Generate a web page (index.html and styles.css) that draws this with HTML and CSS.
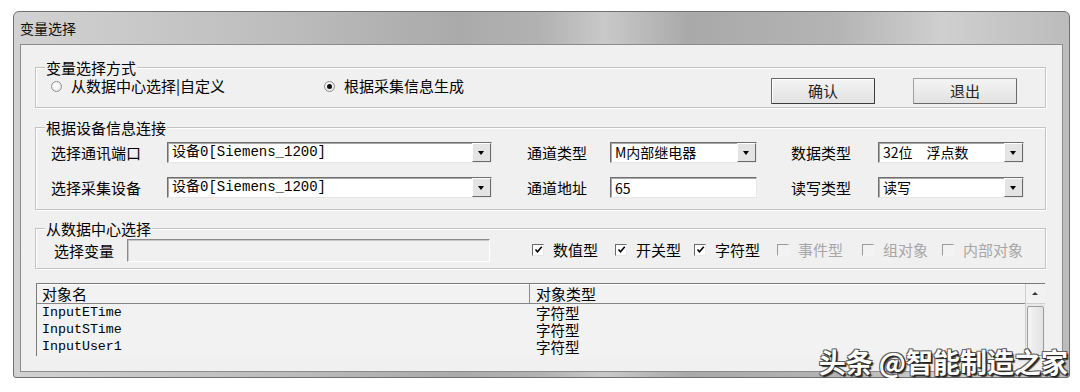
FILE: index.html
```html
<!DOCTYPE html>
<html lang="zh-CN">
<head>
    <meta charset="UTF-8">
    <meta name="viewport" content="width=device-width, initial-scale=1.0">
    <title>变量选择</title>
    <link rel="stylesheet" href="styles.css">
</head>
<body>
    <div class="window">
        <div class="titlebar">变量选择</div>
        <div class="client">
            <!-- 变量选择方式 -->
            <div class="group group-mode">
                <span class="group-title">变量选择方式</span>
                <label class="radio radio-first"><span class="radio-dot"></span>从数据中心选择|自定义</label>
                <label class="radio"><span class="radio-dot checked"></span>根据采集信息生成</label>
                <button class="btn btn-default">确认</button>
                <button class="btn">退出</button>
            </div>

            <!-- 根据设备信息连接 -->
            <div class="group group-device">
                <span class="group-title">根据设备信息连接</span>
                <div class="field-grid">
                    <span class="field-label">选择通讯端口</span>
                    <div class="combo"><span class="combo-text mono">设备0[Siemens_1200]</span><span class="combo-arrow"></span></div>
                    <span class="field-label col2">通道类型</span>
                    <div class="combo"><span class="combo-text">M内部继电器</span><span class="combo-arrow"></span></div>
                    <span class="field-label col3">数据类型</span>
                    <div class="combo"><span class="combo-text">32位　浮点数</span><span class="combo-arrow"></span></div>

                    <span class="field-label">选择采集设备</span>
                    <div class="combo"><span class="combo-text mono">设备0[Siemens_1200]</span><span class="combo-arrow"></span></div>
                    <span class="field-label col2">通道地址</span>
                    <div class="textbox">65</div>
                    <span class="field-label col3">读写类型</span>
                    <div class="combo"><span class="combo-text">读写</span><span class="combo-arrow"></span></div>
                </div>
            </div>

            <!-- 从数据中心选择 -->
            <div class="group group-center">
                <span class="group-title">从数据中心选择</span>
                <span class="var-label">选择变量</span>
                <div class="textbox var-input"></div>
                <div class="checks">
                    <label class="check w83"><span class="check-box on"><svg viewBox="0 0 9 9" width="9" height="9"><path d="M1.5 4.5 L3.5 6.8 L7.8 1.8" fill="none" stroke="#000" stroke-width="1.6"/></svg></span>数值型</label>
                    <label class="check w79"><span class="check-box on"><svg viewBox="0 0 9 9" width="9" height="9"><path d="M1.5 4.5 L3.5 6.8 L7.8 1.8" fill="none" stroke="#000" stroke-width="1.6"/></svg></span>开关型</label>
                    <label class="check w83"><span class="check-box on"><svg viewBox="0 0 9 9" width="9" height="9"><path d="M1.5 4.5 L3.5 6.8 L7.8 1.8" fill="none" stroke="#000" stroke-width="1.6"/></svg></span>字符型</label>
                    <label class="check w85 disabled"><span class="check-box"></span>事件型</label>
                    <label class="check w80 disabled"><span class="check-box"></span>组对象</label>
                    <label class="check disabled"><span class="check-box"></span>内部对象</label>
                </div>
            </div>

            <!-- 对象列表 -->
            <div class="list">
                <div class="list-body">
                    <div class="list-head">
                        <span class="col-name">对象名</span>
                        <span class="col-type">对象类型</span>
                    </div>
                    <div class="list-row"><span class="col-name mono">InputETime</span><span class="col-type">字符型</span></div>
                    <div class="list-row"><span class="col-name mono">InputSTime</span><span class="col-type">字符型</span></div>
                    <div class="list-row"><span class="col-name mono">InputUser1</span><span class="col-type">字符型</span></div>
                </div>
                <div class="scrollbar">
                    <span class="scroll-up"></span>
                    <span class="scroll-thumb"></span>
                </div>
            </div>
        </div>
        <div class="watermark">头条 @智能制造之家</div>
    </div>
</body>
</html>
```

FILE: styles.css
```css
body {
    margin: 0;
    background: #fff;
    font-family: "Noto Sans CJK SC", sans-serif;
    color: #000;
}

/* Window frame */
.window {
    position: relative;
    box-sizing: border-box;
    width: 1057px;
    height: 367px;
    margin: 11px 0 0 13px;
    padding: 0 6px 5px;
    border: 1px solid #6f6f6f;
    border-radius: 6px 6px 3px 3px;
    background: linear-gradient(90deg, #d2d2d2 0%, #bdbdbd 25%, #aaaaaa 42%, #b2b2b2 50%, #c9c9c9 56%, #a9a9a9 64%, #b4b4b4 78%, #cfcfcf 88%, #bcbcbc 100%);
}

.titlebar {
    height: 32px;
    line-height: 32px;
    font-size: 14px;
    color: #111;
}

.client {
    box-sizing: border-box;
    height: 328px;
    padding-left: 14px;
    border: 1px solid #8c8c8c;
    background: #f0f0f0;
    overflow: hidden;
}

/* Group boxes */
.group {
    position: relative;
    box-sizing: border-box;
    width: 1011px;
    border: 1px solid #c3c3c3;
    box-shadow: inset 1px 1px 0 #fff, 1px 1px 0 #fff;
}

.group-title {
    position: absolute;
    top: -8px;
    left: 9px;
    padding: 0 1px;
    font-size: 15px;
    line-height: 15px;
    background: #f0f0f0;
}

.group-mode {
    display: flex;
    align-items: center;
    margin-top: 22px;
    height: 41px;
    padding: 0 28px 0 15px;
}

.radio {
    display: flex;
    align-items: center;
    font-size: 15px;
    line-height: 16px;
    margin-top: -3px;
}

.radio-first {
    width: 273px;
}

.radio-dot {
    position: relative;
    box-sizing: border-box;
    width: 11px;
    height: 11px;
    margin-right: 9px;
    border: 1px solid #8e8e8e;
    border-radius: 50%;
    background: radial-gradient(circle at 40% 40%, #fff, #e2e2e2);
}

.radio-dot.checked::after {
    content: "";
    position: absolute;
    top: 2px;
    left: 2px;
    width: 5px;
    height: 5px;
    border-radius: 50%;
    background: #111;
}

.btn {
    box-sizing: border-box;
    width: 104px;
    height: 26px;
    padding: 0;
    font-family: inherit;
    font-size: 15px;
    font-weight: 400;
    color: #222;
    background: linear-gradient(#f4f4f4, #ebebeb 50%, #e2e2e2);
    border: 1px solid #a0a0a0;
    border-right-color: #6a6a6a;
    border-bottom-color: #6a6a6a;
    border-radius: 1px;
    margin-top: 6px;
}

.btn-default {
    margin-left: auto;
    margin-right: 38px;
    border-color: #6a6a6a #3c3c3c #3c3c3c #6a6a6a;
    box-shadow: inset 1px 1px 0 #fff;
}

.group-device {
    margin-top: 19px;
    height: 83px;
    padding: 14px 0 0 15px;
}

.field-grid {
    display: grid;
    grid-template-columns: 116px 325px 118px 147px 121px 146px;
    grid-auto-rows: 21px;
    row-gap: 14px;
    align-items: center;
}

.field-label {
    font-size: 15px;
    line-height: 18px;
}

.field-label.col2 {
    padding-left: 35px;
}

.field-label.col3 {
    padding-left: 34px;
}

.combo,
.textbox {
    box-sizing: border-box;
    height: 21px;
    display: flex;
    align-items: center;
    border: 1px solid;
    border-color: #6e6e6e #e6e6e6 #e6e6e6 #6e6e6e;
    box-shadow: inset 1px 1px 0 #a8a8a8;
    background: #fff;
}

.combo-text {
    flex: 1;
    padding-left: 4px;
    font-size: 14px;
    line-height: 19px;
    white-space: nowrap;
}

.mono {
    font-family: "Liberation Mono", "Noto Sans CJK SC", monospace;
}

.combo .mono {
    font-size: 14px;
}

.combo-arrow {
    position: relative;
    box-sizing: border-box;
    width: 19px;
    height: 19px;
    border: 1px solid;
    border-color: #fff #696969 #696969 #fff;
    background: #e4e4e4;
}

.combo-arrow::after {
    content: "";
    position: absolute;
    top: 7px;
    left: 5px;
    border-left: 3.5px solid transparent;
    border-right: 3.5px solid transparent;
    border-top: 4px solid #000;
}

.textbox {
    padding-left: 4px;
    font-size: 14px;
}

.group-center {
    display: flex;
    align-items: center;
    margin-top: 18px;
    height: 41px;
    padding: 4px 0 0 18px;
}

.var-label {
    width: 73px;
    font-size: 15px;
    line-height: 18px;
}

.var-input {
    width: 363px;
    height: 23px;
    background: #f0f0f0;
    border-color: #8a8a8a #fff #fff #8a8a8a;
    box-shadow: inset 1px 1px 0 #c8c8c8;
}

.checks {
    display: flex;
    align-items: center;
    margin-left: 42px;
    margin-top: -2px;
}

.check {
    display: flex;
    align-items: center;
    font-size: 15px;
    line-height: 18px;
}

.w83 { width: 83px; }
.w79 { width: 79px; }
.w85 { width: 85px; }
.w80 { width: 80px; }

.check-box {
    box-sizing: border-box;
    display: flex;
    align-items: center;
    justify-content: center;
    width: 12px;
    height: 12px;
    margin-right: 9px;
    border: 1px solid;
    border-color: #6a6a6a #e8e8e8 #e8e8e8 #6a6a6a;
    background: #fff;
}

.check.disabled {
    color: #a6a6a6;
}

.check.disabled .check-box {
    border-color: #9a9a9a #f4f4f4 #f4f4f4 #9a9a9a;
    background: #f2f2f2;
}

/* Object list */
.list {
    display: flex;
    width: 1008px;
    height: 72px;
    margin: 14px 0 0 1px;
    border-left: 1px solid #7a7a7a;
    border-top: 1px solid #7a7a7a;
    background: #f2f2f2;
}

.list-body {
    flex: 1;
}

.list-head {
    display: flex;
    height: 19px;
    border-bottom: 1px solid #858585;
    box-shadow: inset 0 1px 0 #fff;
    font-size: 15px;
    line-height: 19px;
}

.list-head .col-name {
    border-right: 1px solid #8a8a8a;
}

.col-name {
    box-sizing: border-box;
    width: 493px;
    padding-left: 5px;
}

.col-type {
    padding-left: 6px;
}

.list-row {
    display: flex;
    align-items: center;
    height: 17px;
    line-height: 17px;
    font-size: 14.5px;
}

.list-row .mono {
    font-size: 13.3px;
}

.scrollbar {
    display: flex;
    flex-direction: column;
    width: 19px;
    border-left: 1px solid #cfcfcf;
    background: #e9e9e9;
}

.scroll-up {
    position: relative;
    box-sizing: border-box;
    height: 20px;
    border-bottom: 1px solid #d0d0d0;
    background: #f2f2f2;
}

.scroll-up::after {
    content: "";
    position: absolute;
    top: 8px;
    left: 6px;
    border-left: 3px solid transparent;
    border-right: 3px solid transparent;
    border-bottom: 3px solid #333;
}

.scroll-thumb {
    flex: 1;
    margin: 2px 1px 0 1px;
    border: 1px solid #9c9c9c;
    border-radius: 2px;
    background: linear-gradient(90deg, #f4f4f4, #e2e2e2);
}

.watermark {
    position: absolute;
    right: 1px;
    top: 335px;
    font-size: 27px;
    line-height: 30px;
    font-weight: 700;
    color: #fff;
    white-space: nowrap;
    text-shadow: 1px 1px 0 #222, 2px 2px 1px #333, -1px -1px 0 #666, 1px -1px 0 #555, -1px 1px 0 #555;
}
```
